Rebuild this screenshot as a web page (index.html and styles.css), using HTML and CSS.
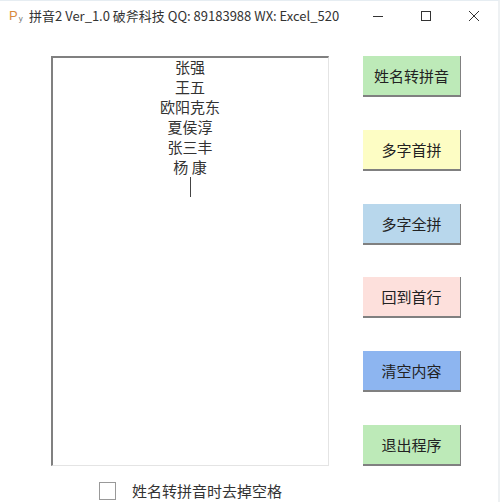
FILE: index.html
```html
<!DOCTYPE html>
<html lang="en">
<head>
    <meta charset="UTF-8">
    <meta name="viewport" content="width=device-width, initial-scale=1.0">
    <title>拼音2</title>
    <link rel="stylesheet" href="styles.css">
</head>
<body>
<div class="window">
    <div class="titlebar">
        <div class="app-icon"><span class="icon-p">P</span><span class="icon-y">y</span></div>
        <div class="title-text">拼音2 Ver_1.0 破斧科技 QQ: 89183988 WX: Excel_520</div>
        <div class="window-controls">
            <svg class="control" width="12" height="12" viewBox="0 0 12 12"><path d="M1 6.5H11" stroke="#333" stroke-width="1" fill="none"/></svg>
            <svg class="control" width="12" height="12" viewBox="0 0 12 12"><rect x="1.5" y="1.5" width="9" height="9" stroke="#333" stroke-width="1" fill="none"/></svg>
            <svg class="control" width="12" height="12" viewBox="0 0 12 12"><path d="M1 1L11 11M11 1L1 11" stroke="#333" stroke-width="1" fill="none"/></svg>
        </div>
    </div>
    <div class="content">
        <div class="name-box">
            <div class="name-line">张强</div>
            <div class="name-line">王五</div>
            <div class="name-line">欧阳克东</div>
            <div class="name-line">夏侯淳</div>
            <div class="name-line">张三丰</div>
            <div class="name-line">杨 康</div>
            <div class="caret"></div>
        </div>
        <div class="button-column">
            <button class="btn green">姓名转拼音</button>
            <button class="btn yellow">多字首拼</button>
            <button class="btn blue">多字全拼</button>
            <button class="btn pink">回到首行</button>
            <button class="btn deep-blue">清空内容</button>
            <button class="btn green">退出程序</button>
        </div>
    </div>
    <div class="option-row">
        <div class="checkbox"></div>
        <div class="option-label">姓名转拼音时去掉空格</div>
    </div>
</div>
</body>
</html>
```
FILE: styles.css
```css
* {
    box-sizing: border-box;
}

html, body {
    margin: 0;
    height: 100%;
}

body {
    background-color: #fff;
    font-family: "Noto Sans CJK SC", "Liberation Sans", sans-serif;
    color: #222;
    overflow: hidden;
}

.window {
    width: 500px;
    height: 502px;
    display: flex;
    flex-direction: column;
    border-top: 1px solid #e6edf2;
    border-right: 2px solid #eef1f3;
}

.titlebar {
    height: 29px;
    display: flex;
    align-items: center;
    padding-left: 9px;
}

.app-icon {
    width: 20px;
    display: flex;
    font-family: "Liberation Sans", sans-serif;
    line-height: 1;
}

.icon-p {
    color: #d9893c;
    font-size: 13px;
}

.icon-y {
    color: #777;
    font-size: 8px;
    margin-top: 6px;
    margin-left: 1px;
}

.title-text {
    font-size: 13px;
    white-space: nowrap;
    color: #333;
}

.window-controls {
    margin-left: auto;
    display: flex;
    gap: 36px;
    padding-right: 18px;
}

.content {
    display: flex;
    align-items: stretch;
    height: 410px;
    margin-top: 26px;
    padding-left: 51px;
}

.name-box {
    width: 278px;
    border-top: 2px solid #808080;
    border-left: 2px solid #808080;
    border-right: 1px solid #e4e4e4;
    border-bottom: 1px solid #e4e4e4;
    padding-right: 1px;
    display: flex;
    flex-direction: column;
    align-items: center;
}

.name-line {
    font-size: 15px;
    line-height: 20px;
    color: #333;
    white-space: pre;
}

.name-line:first-child {
    margin-top: -1px;
}

.caret {
    width: 1px;
    height: 20px;
    background-color: #444;
}

.button-column {
    margin-left: 34px;
    display: flex;
    flex-direction: column;
    justify-content: space-between;
    width: 98px;
}

.btn {
    height: 41px;
    padding: 0;
    border: none;
    border-right: 1px solid #808080;
    border-bottom: 2px solid #808080;
    font-family: inherit;
    font-size: 15px;
    color: #222;
}

.green {
    background-color: #bdeab8;
}

.yellow {
    background-color: #fdfdc4;
}

.blue {
    background-color: #b8d7ec;
}

.pink {
    background-color: #fde0dc;
}

.deep-blue {
    background-color: #8db5f0;
}

.option-row {
    display: flex;
    align-items: center;
    margin-top: 16px;
    padding-left: 99px;
}

.checkbox {
    width: 17px;
    height: 18px;
    border: 1px solid #999;
    background-color: #fff;
}

.option-label {
    margin-left: 16px;
    font-size: 15px;
    line-height: 18px;
    color: #333;
}
```
